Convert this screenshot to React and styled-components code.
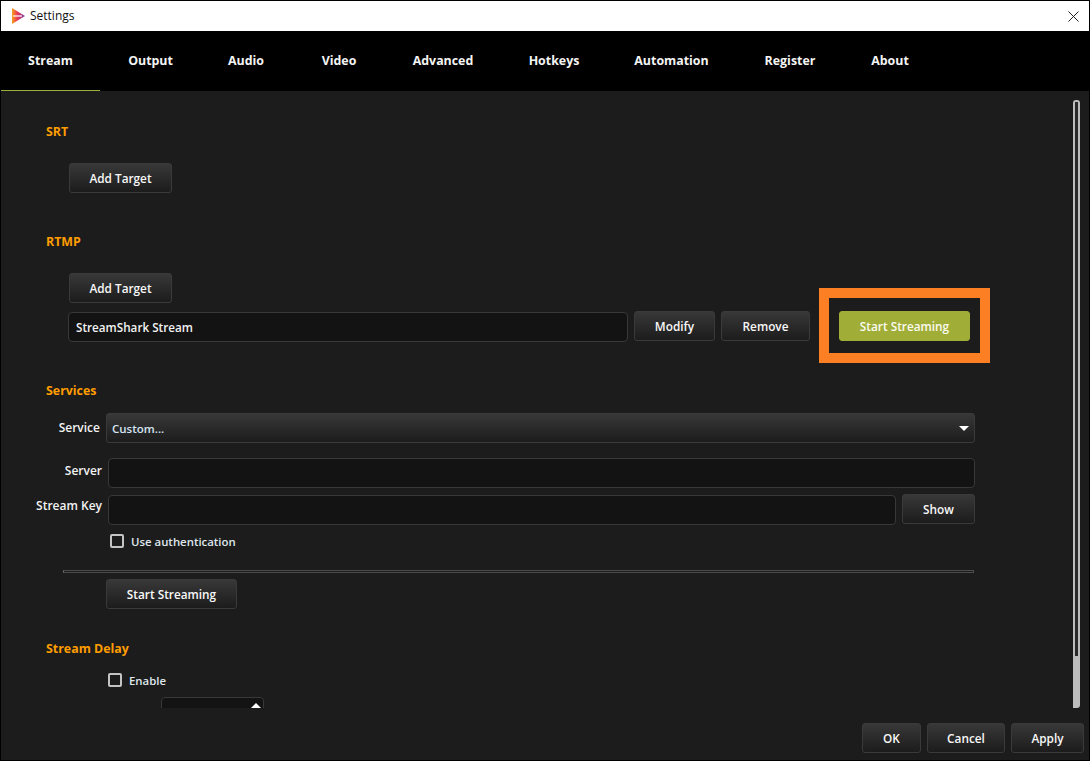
import React from "react";
import styled, { createGlobalStyle } from "styled-components";

const Global = createGlobalStyle`
  html, body { margin: 0; padding: 0; background: #000; }
  #root { width: 1090px; height: 761px; }
  * { box-sizing: border-box; }
`;

const Font = `"Open Sans", "Noto Sans", sans-serif`;

const Win = styled.div`
  width: 1090px; height: 761px; border: 1px solid #000;
  display: flex; flex-direction: column; background: #1c1c1c; font-family: ${Font};
  color: #f2f2f2; overflow: hidden;
`;
const TitleBar = styled.div`
  height: 30px; flex: none; background: #fff; color: #111; display: flex; align-items: center;
  font-size: 12px; padding: 0 0 0 10px; gap: 5px;
`;
const TitleText = styled.span`flex: 1; font-weight: 400; position: relative; top: -1px;`;
const CloseBox = styled.div`width: 31px; height: 30px; display: flex; align-items: center; justify-content: center;`;
const Tabs = styled.div`height: 60px; flex: none; background: #000; display: flex;`;
const Tab = styled.div`
  height: 60px; width: ${p => p.$w}px; display: flex; align-items: center; justify-content: center;
  font-size: 12.4px; font-weight: 700; color: #f4f4f4;
  border-bottom: 1px solid ${p => (p.$active ? "#9fae37" : "transparent")};
`;
const Middle = styled.div`height: 617px; flex: none; display: flex;`;
const Scroll = styled.div`flex: 1; min-width: 0; overflow: hidden; padding-top: 30px; display: flex; flex-direction: column;`;
const Heading = styled.div`
  height: 20px; line-height: 22px; font-size: 12.4px; font-weight: 700; color: #ff9d00;
  margin: ${p => p.$mt || 0}px 0 0 45px; flex: none;
`;
const Btn = styled.div`
  height: 30px; width: ${p => p.$w}px; flex: none; display: flex; align-items: center; justify-content: center;
  font-size: 11.8px; font-weight: 600; color: #f8f8f8; border: 1px solid #3a3a3a; border-radius: 3px;
  background: linear-gradient(#383838, #1c1c1c);
`;
const GreenBtn = styled(Btn)`background: #a0ad37; border-color: #a0ad37; color: #fbfbf0;`;
const Block = styled.div`margin: ${p => p.$mt || 0}px 0 0 ${p => p.$ml || 0}px; display: flex; flex: none;`;
const Input = styled.div`
  height: 30px; flex: none; width: ${p => p.$w}px; margin-top: ${p => p.$mt || 0}px;
  background: #131313; border: 1px solid #383838; border-radius: 4px;
  font-size: 11.7px; font-weight: 600; display: flex; align-items: center; padding: 0 0 0 7px;
`;
const TargetRow = styled.div`display: flex; align-items: flex-start; margin: 8px 0 0 67px; flex: none; height: 31px;`;
const HighlightWrap = styled.div`position: relative; margin-left: 29px;`;
const HighlightFrame = styled.div`
  position: absolute; left: -20px; top: -23px; width: 171px; height: 75px; border: 10px solid #fd7f24; pointer-events: none;
`;
const FormRow = styled.div`display: flex; align-items: flex-start; flex: none; margin-top: ${p => p.$mt || 0}px;`;
const Label = styled.div`
  width: ${p => p.$w}px; flex: none; text-align: right; font-size: 12px; font-weight: 600; padding-right: 6px;
  line-height: 16px; padding-top: ${p => p.$pt || 0}px;
`;
const Select = styled.div`
  width: 869px; height: 30px; flex: none; border: 1px solid #3a3a3a; border-radius: 3px;
  background: linear-gradient(#383838, #1c1c1c); display: flex; align-items: center; justify-content: space-between;
  font-size: 11.5px; font-weight: 600; padding: 1px 5px 0 5px; color: #d5e4f2;
`;
const Caret = styled.div`
  width: 0; height: 0; border-left: 5px solid transparent; border-right: 5px solid transparent; border-top: 5px solid #fff;
`;
const CheckRow = styled.div`
  display: flex; align-items: center; gap: 7px; flex: none; font-size: 11.4px; font-weight: 600; color: #dfe6ec;
  margin: ${p => p.$mt || 0}px 0 0 ${p => p.$ml}px; height: 16px;
`;
const Box = styled.div`width: 14px; height: 14px; border: 2px solid #c4c4c4; border-radius: 2px; flex: none;`;
const Sep = styled.div`
  width: 911px; height: 3px; flex: none; margin: ${p => p.$mt}px 0 0 62px; border: 1px solid #4c4c4c; background: #1c1c1c; border-left-color: #666;
`;
const Spin = styled.div`
  width: 103px; height: 30px; flex: none; margin: 9px 0 0 160px; background: #131313; border: 1px solid #383838; border-radius: 4px;
  display: flex; justify-content: flex-end; padding: 5px 2px 0 0;
`;
const UpCaret = styled.div`width: 0; height: 0; border-left: 5px solid transparent; border-right: 5px solid transparent; border-bottom: 5px solid #fff;`;
const ScrollTrack = styled.div`width: 17px; flex: none; padding: 9px 9px 0 1px;`;
const Thumb = styled.div`
  width: 7px; height: 608px; background: #bdbdbd; border-radius: 3px 3px 3px 0; position: relative;
`;
const ThumbGroove = styled.div`position: absolute; left: 2px; top: 2px; right: 2px; height: 554px; background: #2a2a2a;`;
const Footer = styled.div`flex: 1; display: flex; justify-content: flex-end; gap: 6px; padding: 15px 5px 0 0;`;

const Logo = () => (
  <svg width="14" height="16" viewBox="0 0 14 16">
    <defs>
      <linearGradient id="lg" x1="0" x2="1" y1="0" y2="0">
        <stop offset="0" stopColor="#f7a11a" />
        <stop offset="0.4" stopColor="#ea3a55" />
        <stop offset="1" stopColor="#7d3aa6" />
      </linearGradient>
    </defs>
    <path d="M1 0 L14 8 L1 16 Z" fill="url(#lg)" />
    <rect x="2" y="7" width="9" height="2" fill="#fff" opacity="0.6" />
  </svg>
);

const tabs = [
  ["Stream", 99], ["Output", 101], ["Audio", 90], ["Video", 96], ["Advanced", 112], ["Hotkeys", 110],
  ["Automation", 125], ["Register", 112], ["About", 88],
];

export default function App() {
  return (
    <>
      <Global />
      <Win>
        <TitleBar>
          <Logo />
          <TitleText>Settings</TitleText>
          <CloseBox>
            <svg width="11" height="11" viewBox="0 0 11 11"><path d="M0.5 0.5 L10.5 10.5 M10.5 0.5 L0.5 10.5" stroke="#222" strokeWidth="1" fill="none" /></svg>
          </CloseBox>
        </TitleBar>
        <Tabs>
          {tabs.map(([t, w], i) => <Tab key={t} $w={w} $active={i === 0}>{t}</Tab>)}
        </Tabs>
        <Middle>
          <Scroll>
            <Heading>SRT</Heading>
            <Block $mt={22} $ml={68}><Btn $w={103}>Add Target</Btn></Block>
            <Heading $mt={38}>RTMP</Heading>
            <Block $mt={22} $ml={68}><Btn $w={103}>Add Target</Btn></Block>
            <TargetRow>
              <Input $w={560} $mt={1}>StreamShark Stream</Input>
              <Block $ml={6}><Btn $w={81}>Modify</Btn></Block>
              <Block $ml={6}><Btn $w={89}>Remove</Btn></Block>
              <HighlightWrap>
                <GreenBtn $w={131}>Start Streaming</GreenBtn>
                <HighlightFrame />
              </HighlightWrap>
            </TargetRow>
            <Heading $mt={38}>Services</Heading>
            <FormRow $mt={13}>
              <Label $w={105} $pt={7}>Service</Label>
              <Select>Custom...<Caret /></Select>
            </FormRow>
            <FormRow $mt={15}>
              <Label $w={107} $pt={5}>Server</Label>
              <Input $w={867} />
            </FormRow>
            <FormRow $mt={6}>
              <Label $w={107} $pt={4}>Stream Key</Label>
              <Input $w={788} $mt={1} />
              <Block $ml={6}><Btn $w={73}>Show</Btn></Block>
            </FormRow>
            <CheckRow $ml={109} $mt={8}><Box />Use authentication</CheckRow>
            <Sep $mt={21} />
            <Block $mt={6} $ml={105}><Btn $w={131}>Start Streaming</Btn></Block>
            <Heading $mt={29}>Stream Delay</Heading>
            <CheckRow $ml={107} $mt={14}><Box />Enable</CheckRow>
            <Spin><UpCaret /></Spin>
          </Scroll>
          <ScrollTrack><Thumb><ThumbGroove /></Thumb></ScrollTrack>
        </Middle>
        <Footer>
          <Btn $w={59}>OK</Btn>
          <Btn $w={78}>Cancel</Btn>
          <Btn $w={73}>Apply</Btn>
        </Footer>
      </Win>
    </>
  );
}
